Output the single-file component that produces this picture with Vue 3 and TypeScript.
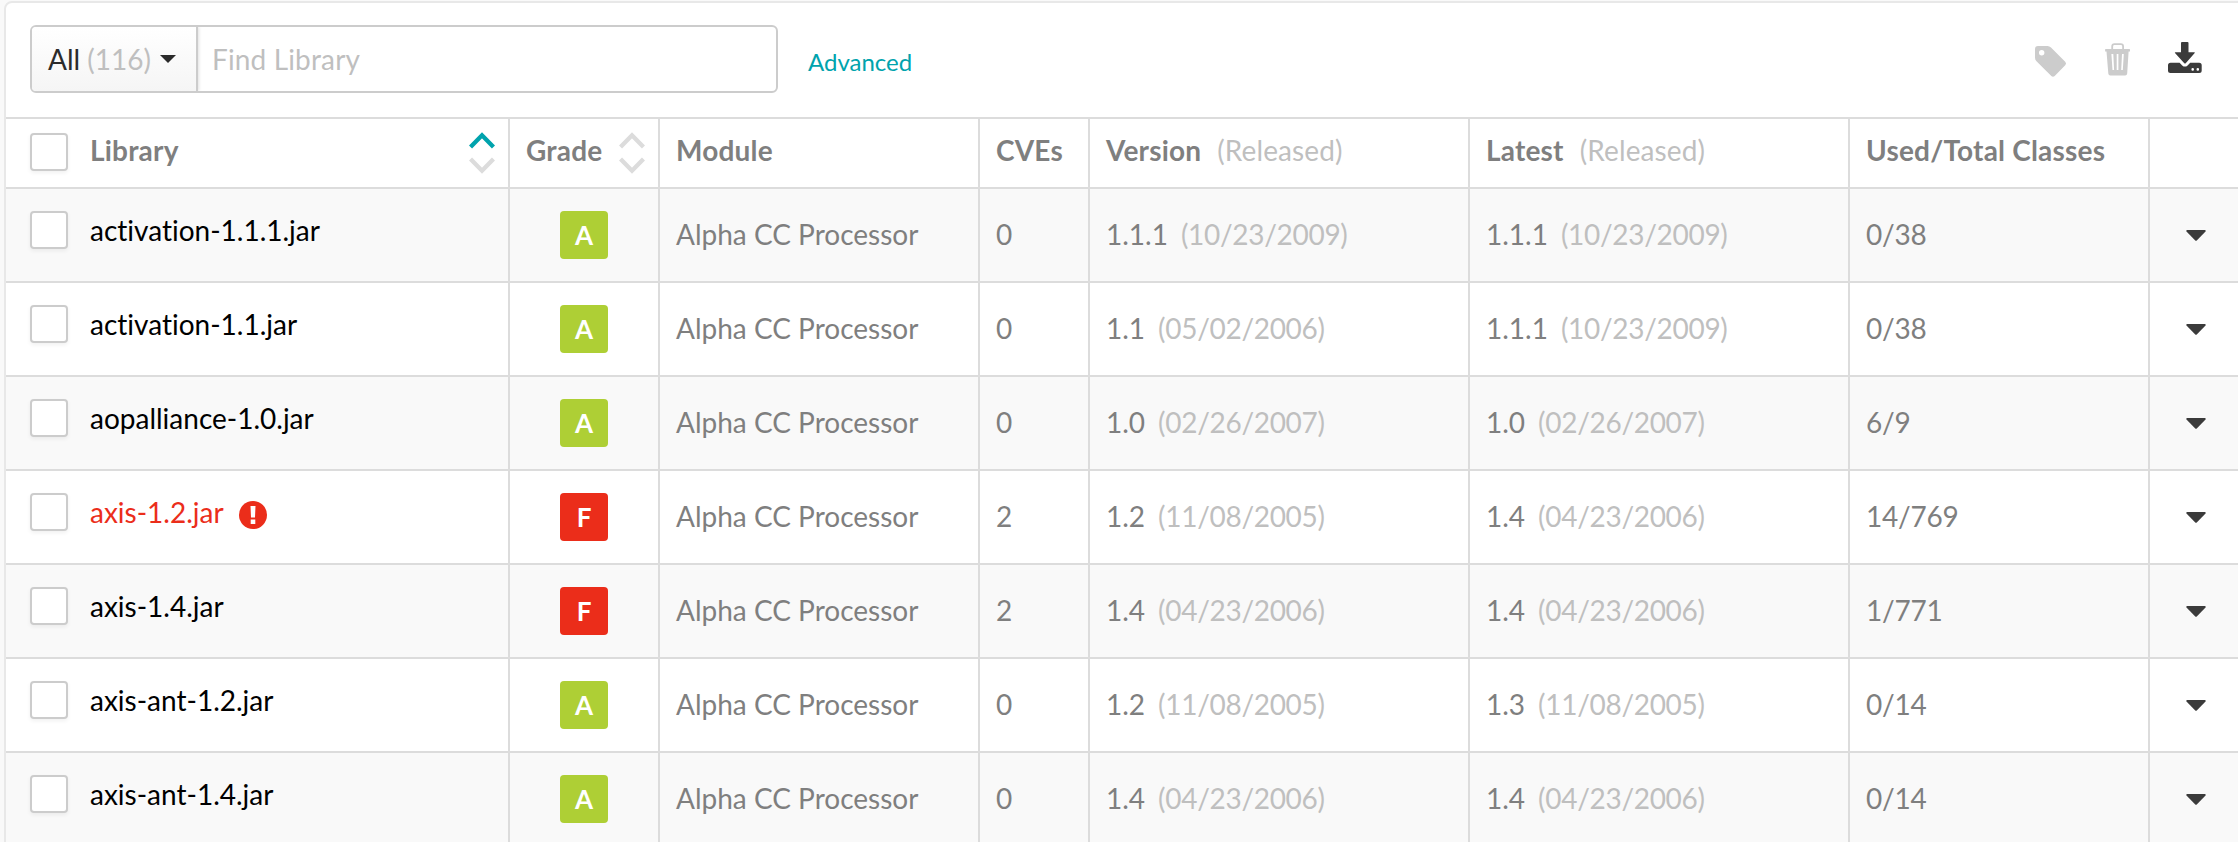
<script setup lang="ts">
import { ref } from 'vue'

interface Library {
  name: string
  grade: 'A' | 'F'
  cves: number
  version: string
  released: string
  latest: string
  latestReleased: string
  classes: string
  alert?: boolean
}

const query = ref('')
const moduleName = 'Alpha CC Processor'

const libraries: Library[] = [
  { name: 'activation-1.1.1.jar', grade: 'A', cves: 0, version: '1.1.1', released: '10/23/2009', latest: '1.1.1', latestReleased: '10/23/2009', classes: '0/38' },
  { name: 'activation-1.1.jar', grade: 'A', cves: 0, version: '1.1', released: '05/02/2006', latest: '1.1.1', latestReleased: '10/23/2009', classes: '0/38' },
  { name: 'aopalliance-1.0.jar', grade: 'A', cves: 0, version: '1.0', released: '02/26/2007', latest: '1.0', latestReleased: '02/26/2007', classes: '6/9' },
  { name: 'axis-1.2.jar', grade: 'F', cves: 2, version: '1.2', released: '11/08/2005', latest: '1.4', latestReleased: '04/23/2006', classes: '14/769', alert: true },
  { name: 'axis-1.4.jar', grade: 'F', cves: 2, version: '1.4', released: '04/23/2006', latest: '1.4', latestReleased: '04/23/2006', classes: '1/771' },
  { name: 'axis-ant-1.2.jar', grade: 'A', cves: 0, version: '1.2', released: '11/08/2005', latest: '1.3', latestReleased: '11/08/2005', classes: '0/14' },
  { name: 'axis-ant-1.4.jar', grade: 'A', cves: 0, version: '1.4', released: '04/23/2006', latest: '1.4', latestReleased: '04/23/2006', classes: '0/14' },
]
</script>

<template>
  <main class="page">
    <section class="panel">
      <header class="toolbar">
        <div class="search">
          <button class="filter" type="button">
            <span>All <span class="muted">(116)</span></span>
            <svg class="filter-caret" viewBox="0 0 16 8"><path d="M0 0H16L8 8Z" /></svg>
          </button>
          <input v-model="query" class="query" type="text" placeholder="Find Library" />
        </div>
        <a class="advanced">Advanced</a>
        <div class="actions">
          <svg class="tag" viewBox="0 0 32 32">
            <path fill-rule="evenodd" d="M3 0H12.5Q14.500 0 16 1.500L30.200 15.700Q32 17.500 30.200 19.300L19.700 30Q18 31.600 16.300 30L1.500 15.300Q0 13.800 0 11.700V3Q0 0 3 0ZM6.700 4.100A2.700 2.700 0 1 0 6.700 9.500A2.700 2.700 0 1 0 6.700 4.100Z" />
          </svg>
          <svg class="trash" viewBox="0 0 26 34">
            <path class="handle" d="M7.200 6.500V3.500Q7.200 1.200 9.500 1.200H15.800Q18.100 1.200 18.100 3.500V6.500" />
            <path fill-rule="evenodd" d="M.6 6H24.400Q25 6 25 6.600V8.600H23.600L22.200 30.500Q22 32.400 20.200 32.400H5.300Q3.500 32.400 3.300 30.500L1.500 8.600H.1V6.600Q.1 6 .6 6ZM6.400 11L7.500 27H9.100L8.300 11ZM11.700 11V27H13.400V11ZM17 11L16.200 27H17.800L18.800 11Z" />
          </svg>
          <svg class="download" viewBox="0 0 34 31">
            <path d="M14 0H19.500Q20.500 0 20.500 1V10.300H26.200Q27.500 10.300 26.500 11.300L17.700 21.200Q17 22 16.300 21.200L7.200 11.300Q6.200 10.300 7.500 10.300H13V1Q13 0 14 0Z" />
            <path fill-rule="evenodd" d="M2.500 20.800H11.600L14.200 23.400Q16.900 25.800 19.600 23.400L22.200 20.800H31.200Q33.700 20.800 33.700 23.300V28.500Q33.700 31 31.200 31H2.500Q0 31 0 28.500V23.300Q0 20.800 2.500 20.800ZM24.700 26.100A1.300 1.300 0 1 0 24.700 28.700A1.300 1.300 0 1 0 24.700 26.100ZM29.800 26.100A1.300 1.300 0 1 0 29.800 28.700A1.300 1.300 0 1 0 29.800 26.100Z" />
          </svg>
        </div>
      </header>

      <div class="row head">
        <div class="cell library">
          <span class="check"></span>
          <span class="label">Library</span>
          <svg class="sort ascending" viewBox="0 0 26 42"><path class="up" d="M1.500 15L13 3.300L24.500 15" /><path d="M1.500 27L13 38.700L24.500 27" /></svg>
        </div>
        <div class="cell">
          <span class="label">Grade</span>
          <svg class="sort" viewBox="0 0 26 42"><path d="M1.500 15L13 3.300L24.500 15" /><path d="M1.500 27L13 38.700L24.500 27" /></svg>
        </div>
        <div class="cell"><span class="label">Module</span></div>
        <div class="cell"><span class="label">CVEs</span></div>
        <div class="cell"><span class="label">Version</span><span class="released">(Released)</span></div>
        <div class="cell"><span class="label">Latest</span><span class="released">(Released)</span></div>
        <div class="cell"><span class="label">Used/Total Classes</span></div>
        <div class="cell"></div>
      </div>

      <div v-for="lib in libraries" :key="lib.name" class="row body">
        <div class="cell library" :class="{ alert: lib.alert }">
          <span class="check"></span>
          <span class="name">{{ lib.name }}</span>
          <svg v-if="lib.alert" class="warning" viewBox="0 0 28 28">
            <circle cx="14" cy="14" r="14" />
            <path d="M11.500 5H16.500L16 16.500H12ZM11.700 18.500H16.300V23H11.700Z" />
          </svg>
        </div>
        <div class="cell center"><span class="badge" :class="lib.grade">{{ lib.grade }}</span></div>
        <div class="cell">{{ moduleName }}</div>
        <div class="cell">{{ lib.cves }}</div>
        <div class="cell">{{ lib.version }}<span class="released">({{ lib.released }})</span></div>
        <div class="cell">{{ lib.latest }}<span class="released">({{ lib.latestReleased }})</span></div>
        <div class="cell classes">{{ lib.classes }}</div>
        <div class="cell menu">
          <svg class="row-caret" viewBox="0 0 20 11"><path d="M1 0H19Q20.400 .6 19.300 1.800L11 10.300Q10 11.300 9 10.300L.7 1.800Q-.4 .6 1 0Z" /></svg>
        </div>
      </div>
    </section>
  </main>
</template>

<style>
body {
  margin: 0;
  overflow: hidden;
}
</style>

<style scoped>
.page {
  box-sizing: border-box;
  width: 2238px;
  height: 842px;
  padding: 1px 0 0 4px;
  overflow: hidden;
  background: #f9f9f9;
  font-family: Lato, "Liberation Sans", sans-serif;
  font-size: 28px;
  line-height: 34px;
  font-variant-ligatures: none;
  color: #7f7f7f;
}

.panel {
  box-sizing: border-box;
  width: 2260px;
  height: 870px;
  border: 2px solid #e8e8e8;
  border-radius: 8px;
  overflow: hidden;
  background: #fff;
}

.toolbar {
  box-sizing: border-box;
  display: flex;
  align-items: flex-start;
  width: 2232px;
  height: 114px;
  padding: 22px 36px 0 24px;
}

.search {
  box-sizing: border-box;
  display: flex;
  width: 748px;
  height: 68px;
  border: 2px solid #ccc;
  border-radius: 6px;
  overflow: hidden;
}

.filter {
  box-sizing: border-box;
  display: flex;
  align-items: center;
  width: 166px;
  flex: none;
  padding: 0 0 1px 16px;
  border: 0;
  border-right: 2px solid #ccc;
  background: linear-gradient(#fff, #f5f5f5);
  box-shadow: 1px 0 3px rgba(0, 0, 0, 0.12);
  font: inherit;
  color: #2b2b2b;
}

.muted {
  color: #bfbfbf;
}

.filter-caret {
  width: 16px;
  height: 8px;
  margin-left: 9px;
  fill: #2b2b2b;
}

.query {
  flex: 1;
  min-width: 0;
  padding: 0 14px 1px;
  border: 0;
  outline: 0;
  background: transparent;
  font: inherit;
  letter-spacing: 0.15px;
  color: #2b2b2b;
}

.query::placeholder {
  color: #bfbfbf;
  opacity: 1;
}

.advanced {
  margin: 20px 0 0 30px;
  font-size: 24px;
  color: #00a3ad;
}

.actions {
  display: flex;
  margin: 17px 0 0 auto;
  fill: #ccc;
}

.tag {
  width: 32px;
  height: 32px;
  margin: 4px 38px 0 0;
}

.trash {
  width: 26px;
  height: 34px;
  margin: 1px 37px 0 0;
}

.handle {
  fill: none;
  stroke: #ccc;
  stroke-width: 1.8;
}

.download {
  width: 34px;
  height: 31px;
  fill: #3b3b3b;
}

.row {
  display: grid;
  grid-template-columns: 504px 150px 320px 110px 380px 380px 300px 1fr;
  border-top: 2px solid #dcdcdc;
}

.head {
  height: 68px;
}

.body {
  height: 92px;
}

.body:nth-child(odd) {
  background: #f9f9f9;
}

.cell {
  box-sizing: border-box;
  display: flex;
  align-items: center;
  padding: 0 16px 2px;
  border-right: 2px solid #dcdcdc;
  white-space: nowrap;
}

.cell:last-child {
  border-right: 0;
}

.head .cell {
  align-items: flex-start;
  padding: 13px 13px 0 16px;
}

.label {
  margin-top: 1px;
  font-weight: 700;
  letter-spacing: 0.2px;
}

.released {
  margin-left: 13px;
  letter-spacing: -0.3px;
  color: #bfbfbf;
}

.head .released {
  margin: 1px 0 0 16px;
  letter-spacing: 0.1px;
}

.classes {
  letter-spacing: -0.2px;
}

.head .library,
.cell.library {
  padding-left: 24px;
}

.body .library {
  align-items: flex-start;
  padding-top: 22px;
  color: #000;
}

.body .library.alert {
  color: #eb2d1a;
}

.check {
  box-sizing: border-box;
  flex: none;
  width: 38px;
  height: 38px;
  margin-right: 22px;
  border: 2px solid #ccc;
  border-radius: 4px;
  background: #fff;
  box-shadow: 0 2px 4px rgba(0, 0, 0, 0.06);
}

.head .check {
  margin-top: 1px;
}

.name {
  margin-top: 2px;
}

.warning {
  width: 28px;
  height: 28px;
  margin: 8px 0 0 15px;
  fill: #eb2d1a;
}

.warning path {
  fill: #fff;
}

.sort {
  flex: none;
  width: 26px;
  height: 42px;
  margin-left: auto;
  fill: none;
  stroke: #dcdcdc;
  stroke-width: 4.4;
}

.ascending .up {
  stroke: #00a3ad;
}

.center {
  justify-content: center;
  padding-bottom: 0;
}

.badge {
  width: 48px;
  height: 48px;
  border-radius: 4px;
  color: #fff;
  font-size: 26px;
  font-weight: 700;
  line-height: 48px;
  text-align: center;
}

.A {
  background: #aecf35;
}

.F {
  background: #eb2d1a;
}

.menu {
  padding: 0 0 0 36px;
}

.row-caret {
  width: 20px;
  height: 11px;
  fill: #3b3b3b;
}
</style>
